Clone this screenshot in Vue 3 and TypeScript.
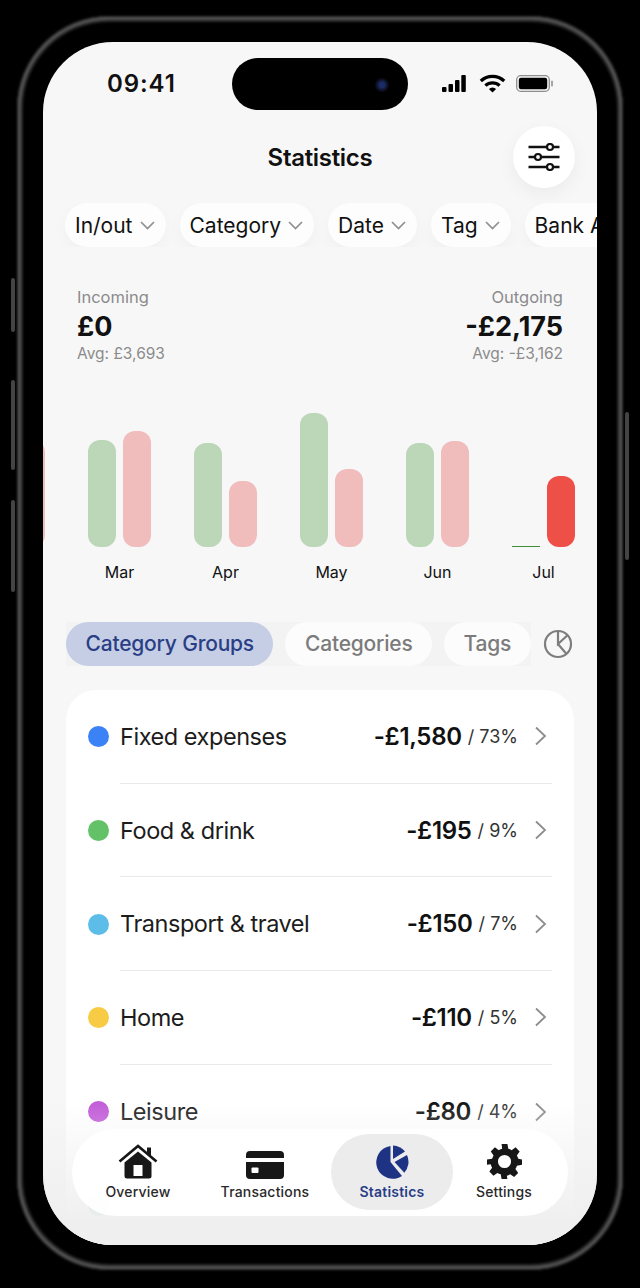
<script setup lang="ts">
interface Bar {
  month: string
  inH: number
  outH: number
  current?: boolean
}

interface Row {
  name: string
  color: string
  amount: string
  pct: string
}

const filters = ['In/out', 'Category', 'Date', 'Tag', 'Bank Accounts']

// first group only peeks in at the left edge, so it has no visible label
const bars: Bar[] = [
  { month: '', inH: 100, outH: 107 },
  { month: 'Mar', inH: 107, outH: 116 },
  { month: 'Apr', inH: 104, outH: 66 },
  { month: 'May', inH: 134, outH: 78 },
  { month: 'Jun', inH: 104, outH: 106 },
  { month: 'Jul', inH: 1, outH: 71, current: true }
]

const rows: Row[] = [
  { name: 'Fixed expenses', color: '#3b82f6', amount: '-£1,580', pct: '73%' },
  { name: 'Food & drink', color: '#63c167', amount: '-£195', pct: '9%' },
  { name: 'Transport & travel', color: '#5bbde8', amount: '-£150', pct: '7%' },
  { name: 'Home', color: '#f8cb45', amount: '-£110', pct: '5%' },
  { name: 'Leisure', color: '#c25ad8', amount: '-£80', pct: '4%' }
]
</script>

<template>
  <div class="page">
    <div class="phone">
      <span class="rim"></span>
      <span class="side-btn btn-a"></span>
      <span class="side-btn btn-b"></span>
      <span class="side-btn btn-c"></span>
      <span class="side-btn btn-d"></span>
      <div class="screen">
        <div class="status">
          <span class="time">09:41</span>
          <div class="island"><span class="camera"></span></div>
          <div class="status-icons">
            <svg width="24" height="17" viewBox="0 0 24 17"><rect x="0" y="12" width="4.5" height="5" rx="1"/><rect x="6.5" y="9" width="4.5" height="8" rx="1"/><rect x="13" y="5" width="4.5" height="12" rx="1"/><rect x="19.3" y="0" width="4.5" height="17" rx="1"/></svg>
            <svg width="27" height="19" viewBox="0 0 27 19" fill="none" stroke="#000" stroke-width="3.2"><path d="M1.8 7a17 17 0 0 1 23.4 0"/><path d="M6.4 11.6a10.4 10.4 0 0 1 14.2 0"/><path d="M13.5 18.6 9.9 15a5 5 0 0 1 7.2 0z" fill="#000" stroke="none"/></svg>
            <svg width="38" height="17" viewBox="0 0 38 17"><rect x="0.7" y="0.7" width="32.6" height="15.6" rx="4" fill="none" stroke="#8e8e8e" stroke-width="1.3"/><rect x="2.8" y="2.8" width="28.4" height="11.4" rx="2.2" fill="#000"/><rect x="35" y="5.5" width="2" height="6" rx="1" fill="#a5a5a5"/></svg>
          </div>
        </div>

        <header class="topbar">
          <h1>Statistics</h1>
          <button class="filter-btn" type="button">
            <svg width="32" height="28" viewBox="0 0 32 28" fill="none" stroke="#111" stroke-width="2.6">
              <path d="M0.5 4h31M0.5 14h31M0.5 24h31"/>
              <circle cx="22" cy="4" r="3" fill="#fff" stroke-width="2.2"/>
              <circle cx="10" cy="14" r="3" fill="#fff" stroke-width="2.2"/>
              <circle cx="22" cy="24" r="3" fill="#fff" stroke-width="2.2"/>
            </svg>
          </button>
        </header>

        <div class="chips">
          <div v-for="f in filters" :key="f" class="chip">
            {{ f }}
            <svg width="15" height="9" viewBox="0 0 15 9" fill="none" stroke="#8f8f8f" stroke-width="1.7"><path d="M1 1l6.5 6.5L14 1"/></svg>
          </div>
        </div>

        <section class="summary">
          <div>
            <div class="sum-label">Incoming</div>
            <div class="sum-value">£0</div>
            <div class="sum-avg">Avg: £3,693</div>
          </div>
          <div class="right">
            <div class="sum-label">Outgoing</div>
            <div class="sum-value">-£2,175</div>
            <div class="sum-avg">Avg: -£3,162</div>
          </div>
        </section>

        <section class="chart">
          <div v-for="(b, i) in bars" :key="i" class="group">
            <div class="pair">
              <span class="bar" :class="b.current ? 'in-now' : 'in'" :style="{ height: b.inH + 'px' }"></span>
              <span class="bar" :class="b.current ? 'out-now' : 'out'" :style="{ height: b.outH + 'px' }"></span>
            </div>
            <span class="month">{{ b.month }}</span>
          </div>
        </section>

        <div class="tabs">
          <div class="tab-list">
            <span class="tab active">Category Groups</span>
            <span class="tab">Categories</span>
            <span class="tab">Tags</span>
          </div>
          <svg class="pie-toggle" width="30" height="30" viewBox="0 0 30 30" fill="none" stroke="#7d7d7d" stroke-width="2.2">
            <circle cx="15" cy="15" r="13"/>
            <path d="M15 2v13l9.5-8.8M15 15l8.5 10"/>
          </svg>
        </div>

        <section class="card">
          <div v-for="r in rows" :key="r.name" class="row">
            <span class="dot" :style="{ background: r.color }"></span>
            <div class="row-body">
              <span class="row-name">{{ r.name }}</span>
              <span class="row-amount">{{ r.amount }}</span>
              <span class="row-pct">/ {{ r.pct }}</span>
              <svg width="13" height="20" viewBox="0 0 13 20" fill="none" stroke="#8d8d8d" stroke-width="1.8"><path d="M2 1.5 11 10l-9 8.5"/></svg>
            </div>
          </div>
          <div class="row">
            <span class="dot" style="background: #8fdcc8"></span>
          </div>
        </section>

        <div class="fade"></div>

        <nav class="nav">
          <div class="nav-item">
            <svg width="40" height="35" viewBox="0 0 40 35">
              <path d="M1.5 17.5 20 2l18.5 15.5" fill="none" stroke="#171717" stroke-width="2.6"/>
              <path d="M29 3.5h4v9l-4-3.3z" fill="#171717"/>
              <path d="M6.5 18.5 20 7.5l13.5 11V32a2.5 2.5 0 0 1-2.5 2.5H9A2.5 2.5 0 0 1 6.5 32z" fill="#171717"/>
              <rect x="15.5" y="21" width="9" height="11" fill="#fff"/>
            </svg>
            <span>Overview</span>
          </div>
          <div class="nav-item">
            <svg width="38" height="28" viewBox="0 0 38 28">
              <path d="M0 4a4 4 0 0 1 4-4h30a4 4 0 0 1 4 4v3H0zM0 11h38v13a4 4 0 0 1-4 4H4a4 4 0 0 1-4-4z" fill="#171717"/>
              <rect x="5.5" y="16.5" width="7" height="5.5" rx="1" fill="#fff"/>
            </svg>
            <span>Transactions</span>
          </div>
          <div class="nav-item current">
            <svg width="34" height="34" viewBox="0 0 34 34">
              <path d="M15.5 1v16l11.5 14A16.5 16.5 0 1 1 15.5 1z" fill="#1f3385"/>
              <path d="M18 0.5a16.5 16.5 0 0 1 12 6L18 14z" fill="#1f3385"/>
              <path d="M19.5 17 32 10a16.5 16.5 0 0 1-2.7 17.8z" fill="#1f3385"/>
            </svg>
            <span>Statistics</span>
          </div>
          <div class="nav-item">
            <svg width="35" height="35" viewBox="0 0 24 24"><path fill="#171717" fill-rule="evenodd" d="M10 0h4l.6 3.2a9 9 0 0 1 2.3 1l2.7-1.900 2.800 2.800-1.900 2.700a9 9 0 0 1 1 2.300L24 10.700v3.600l-3.500.6a9 9 0 0 1-1 2.300l1.900 2.700-2.800 2.800-2.700-1.900a9 9 0 0 1-2.300 1L14 24h-4l-.6-3.200a9 9 0 0 1-2.300-1l-2.700 1.900-2.800-2.800 1.900-2.700a9 9 0 0 1-1-2.300L0 14.300v-3.600l3.500-.6a9 9 0 0 1 1-2.300L2.600 5.100l2.800-2.800 2.700 1.900a9 9 0 0 1 2.300-1zM12 7.500a4.500 4.500 0 1 0 0 9 4.500 4.500 0 0 0 0-9z"/></svg>
            <span>Settings</span>
          </div>
        </nav>
      </div>
    </div>
  </div>
</template>

<style>
html,
body {
  margin: 0;
  background: #000;
}
</style>

<style scoped>
.page {
  width: 640px;
  height: 1288px;
  padding: 15px 16px 17px;
  box-sizing: border-box;
  background: #000;
  font-family: Inter, "Liberation Sans", sans-serif;
  color: #111;
}

.phone {
  position: relative;
  height: 100%;
  padding: 27px 27px 26px;
  box-sizing: border-box;
}

.rim {
  position: absolute;
  inset: 1px;
  border-radius: 92px;
  box-shadow: inset 0 0 0 1.5px #333, inset 0 0 0 3.5px #5c5c5c, inset 0 0 0 6px #2a2a2a;
  filter: blur(0.8px);
}

.side-btn {
  position: absolute;
  width: 4px;
  border-radius: 2px;
  background: #444;
}

.btn-a { left: -5px; top: 263px; height: 54px; }
.btn-b { left: -5px; top: 365px; height: 90px; }
.btn-c { left: -5px; top: 485px; height: 92px; }
.btn-d { right: -5px; top: 397px; height: 148px; }

.screen {
  position: relative;
  height: 100%;
  overflow: hidden;
  border-radius: 70px;
  background: #f7f7f8;
}

.status {
  display: flex;
  align-items: center;
  justify-content: space-between;
  height: 52px;
  margin-top: 15px;
  padding: 0 43px 0 64px;
}

.time {
  font-size: 24px;
  font-weight: 600;
  letter-spacing: 0.9px;
}

.island {
  position: absolute;
  top: 16px;
  left: 189px;
  width: 176px;
  height: 52px;
  border-radius: 26px;
  background: #000;
}

.camera {
  position: absolute;
  top: 20px;
  right: 19px;
  width: 14px;
  height: 14px;
  border-radius: 50%;
  background: radial-gradient(circle, #1c2b66 0 25%, #0a0d1a 60%, #000 100%);
}

.status-icons {
  display: flex;
  align-items: center;
  gap: 10px;
}

.status-icons svg:first-child {
  margin-right: 3px;
}

.topbar {
  position: relative;
  display: flex;
  align-items: center;
  justify-content: center;
  height: 62px;
  margin-top: 17px;
}

.topbar h1 {
  margin: 0;
  font-size: 24px;
  font-weight: 600;
  letter-spacing: -0.3px;
}

.filter-btn {
  position: absolute;
  top: 0;
  right: 22px;
  display: flex;
  align-items: center;
  justify-content: center;
  width: 62px;
  height: 62px;
  padding: 0;
  border: 0;
  border-radius: 50%;
  background: #fff;
  box-shadow: 0 6px 18px rgba(0, 0, 0, 0.05);
}

.chips {
  display: flex;
  gap: 14px;
  margin-top: 15px;
  padding: 0 22px;
  overflow: hidden;
}

.chip {
  display: flex;
  flex: none;
  align-items: center;
  gap: 7px;
  height: 44px;
  padding: 0 11px 0 10px;
  border-radius: 22px;
  background: #fdfdfd;
  font-size: 21px;
  box-shadow: 0 6px 16px rgba(0, 0, 0, 0.03);
}

.summary {
  display: flex;
  justify-content: space-between;
  margin-top: 40px;
  padding: 0 34px;
}

.right {
  text-align: right;
}

.sum-label {
  font-size: 16.5px;
  line-height: 20px;
  color: #8b8b8b;
}

.sum-value {
  margin-top: 4px;
  font-size: 27px;
  line-height: 32px;
  font-weight: 700;
}

.sum-avg {
  margin-top: 2px;
  font-size: 15.5px;
  line-height: 18px;
  color: #8b8b8b;
}

.chart {
  display: flex;
  justify-content: flex-end;
  gap: 43px;
  height: 200px;
  margin-top: 38px;
  padding-right: 22px;
  overflow: hidden;
}

.group {
  display: flex;
  flex: none;
  flex-direction: column;
  align-items: center;
  width: 63px;
}

.pair {
  display: flex;
  align-items: flex-end;
  gap: 7px;
  height: 146px;
}

.bar {
  width: 28px;
  border-radius: 12px;
}

.in { background: #bbd7b8; }
.out { background: #f1bcbc; }
.in-now { background: #3f8f3a; border-radius: 0; }
.out-now { background: #ee4f47; }

.month {
  margin-top: 15px;
  font-size: 16px;
  line-height: 20px;
}

.tabs {
  display: flex;
  align-items: center;
  justify-content: space-between;
  margin-top: 21px;
  padding: 0 24px 0 23px;
}

.tab-list {
  display: flex;
  gap: 12px;
  background: #f3f3f4;
}

.tab {
  height: 44px;
  padding: 0 19.5px;
  border-radius: 22px;
  background: #fcfcfc;
  font-size: 21px;
  font-weight: 500;
  line-height: 44px;
  letter-spacing: -0.2px;
  white-space: nowrap;
  color: #7b7b7b;
}

.tab.active {
  background: #c5cee4;
  color: #2a3e86;
}

.card {
  margin: 24px 23px 0;
  border-radius: 30px;
  background: #fff;
}

.row {
  display: flex;
  align-items: center;
  height: 93.7px;
  padding: 0 22px;
}

.dot {
  flex: none;
  width: 21px;
  height: 21px;
  margin-right: 11px;
  border-radius: 50%;
}

.row-body {
  display: flex;
  flex: 1;
  align-items: center;
  align-self: stretch;
  border-bottom: 1px solid #e9e9e9;
}

.row:nth-child(5) .row-body {
  border-bottom: 0;
}

.row-name {
  flex: 1;
  font-size: 23.5px;
  letter-spacing: -0.45px;
  color: #1c1c1c;
}

.row-amount {
  font-size: 24px;
  font-weight: 600;
  letter-spacing: -0.3px;
}

.row-pct {
  margin: 0 16px 0 6px;
  font-size: 18px;
  color: #333;
  white-space: nowrap;
}

.row-body svg {
  margin-right: 5px;
}

.fade {
  position: absolute;
  right: 0;
  bottom: 0;
  left: 0;
  height: 145px;
  background: linear-gradient(rgba(240, 240, 240, 0), #efefef 85%);
  pointer-events: none;
}

.nav {
  position: absolute;
  right: 29px;
  bottom: 29px;
  left: 29px;
  display: grid;
  grid-template-columns: 126px 128px 124px 102px;
  height: 87px;
  padding: 5px 3px;
  box-sizing: border-box;
  border-radius: 44px;
  background: rgba(255, 255, 255, 0.94);
}

.nav-item {
  display: flex;
  flex-direction: column;
  align-items: center;
  justify-content: flex-end;
  height: 76px;
  border-radius: 38px;
  padding-bottom: 10px;
  box-sizing: border-box;
  font-size: 14px;
  font-weight: 500;
  letter-spacing: 0.2px;
  color: #2a2a2a;
}

.nav-item svg {
  margin-bottom: 4px;
}

.nav-item.current {
  margin-left: 2px;
  background: #ececed;
  color: #2a3e86;
  font-weight: 600;
}
</style>
